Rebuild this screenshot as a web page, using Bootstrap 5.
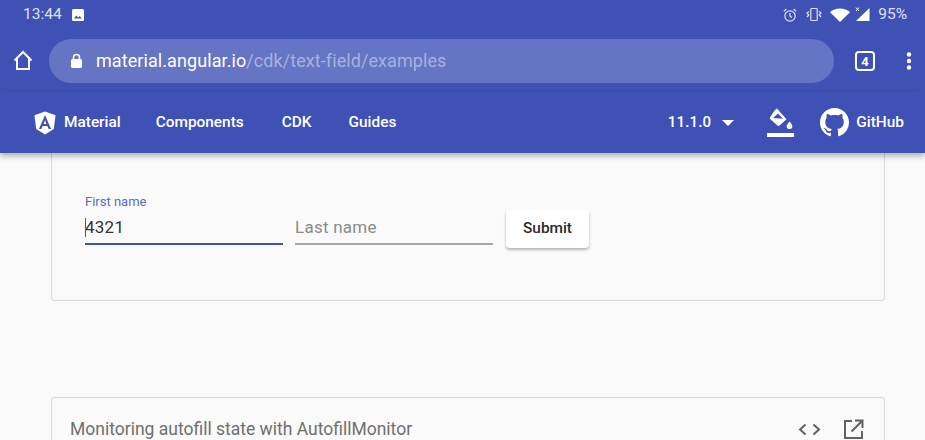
<!DOCTYPE html>
<html lang="en">
<head>
    <meta charset="UTF-8">
    <meta name="viewport" content="width=device-width, initial-scale=1.0">
    <title>Text field | Angular Material</title>
    <link href="https://cdn.jsdelivr.net/npm/bootstrap@5.3.2/dist/css/bootstrap.min.css" rel="stylesheet">
    <style>
        html, body { height: 440px; overflow: hidden; }
        body { background: #fafafa; font-family: Roboto, "Liberation Sans", sans-serif; color: #212121; }
        .phone-head { background: #3f51b5; color: #fff; }
        .status-bar { height: 29px; padding: 0 18px 0 23px; font-size: 15.5px; color: #dfe2f3; }
        .status-bar svg { display: block; }
        .url-row { height: 63px; padding-left: 13px; padding-right: 12px; box-shadow: 0 1px 2px rgba(30, 40, 100, .25); position: relative; }
        .url-pill { width: 785px; height: 44px; margin-left: 16px; background: #6674c4; border-radius: 22px; padding-left: 21px; font-size: 18px; letter-spacing: .08px; flex-shrink: 0; }
        .url-rest { color: #a9b1de; }
        .app-nav { height: 61px; background: #3f51b5; box-shadow: 0 3px 6px rgba(0, 0, 0, .3); position: relative; z-index: 2; padding-left: 34px; padding-right: 21px; font-size: 15.4px; font-weight: 500; }
        .app-nav span { white-space: nowrap; }
        .page-main { padding: 0 40px 0 51px; }
        .demo-box { background: #fafafa; border: 1px solid #d9d9d9; border-radius: 4px; }
        .demo-form { height: 148px; border-top: 0; border-radius: 0 0 4px 4px; padding: 42px 33px 0; }
        .text-field { width: 198px; height: 50px; border-bottom: 2px solid #a8a8a8; position: relative; }
        .text-field.is-active { border-bottom-color: #3f51b5; }
        .float-label { font-size: 13px; line-height: 14px; color: #5c6bc0; height: 14px; display: block; }
        .field-val { font-size: 17px; line-height: 20px; margin-top: 8px; display: block; color: #333; letter-spacing: .25px; }
        .field-hint { color: #8a8a8a; margin-top: 22px; }
        .caret-line { position: absolute; left: 0; top: 23px; height: 19px; width: 1px; background: #3f51b5; }
        .submit-btn { width: 83px; height: 39px; margin-top: 14px; background: #fff; border: 0; border-radius: 4px; font-size: 15.4px; font-weight: 500; color: #2a2a2a; box-shadow: 0 2px 3px rgba(0, 0, 0, .28); padding: 0; }
        .submit-btn:hover { background: #fff; color: #2a2a2a; }
        .demo-head { margin-top: 96px; height: 60px; border-bottom: 0; padding: 0 20px 0 18px; border-radius: 4px 4px 0 0; color: #6f6f6f; font-size: 17.5px; }
    </style>
</head>
<body>
    <div class="phone-head">
        <div class="status-bar d-flex align-items-center">
            <span>13:44</span>
            <svg width="14" height="14" viewBox="0 0 14 14" style="margin-left:9px"><rect x="1" y="1" width="12" height="12" rx="1.5" fill="#fff"/><path d="M3 10.5l2.4-3 1.7 2 1.6-1.6 2.3 2.6z" fill="#3f51b5"/></svg>
            <div class="ms-auto d-flex align-items-center">
                <svg width="16" height="16" viewBox="0 0 16 16" fill="none" stroke="#dfe2f3" stroke-width="1.2"><circle cx="8" cy="9" r="5.2"/><path d="M8 6v3.2l2 1.2M1.8 4.2L4.4 2M14.2 4.2L11.6 2"/></svg>
                <svg style="margin-left:8px" width="16" height="15" viewBox="0 0 16 15" fill="none" stroke="#dfe2f3" stroke-width="1.2"><rect x="4.8" y="1.5" width="6.4" height="12" rx=".8"/><path d="M2.8 4.5L1 6l1.8 2L1 10M13.2 4.5L15 6l-1.800 2L15 10"/></svg>
                <svg style="margin-left:8px" width="20" height="14" viewBox="0 0 20 14"><path d="M0 4.2C2.8 1.8 6.2 .5 10 .5s7.200 1.300 10 3.700L10 14z" fill="#fff"/></svg>
                <svg style="margin-left:4px" width="17" height="17" viewBox="0 0 17 17"><path d="M15.500 2v13H2z" fill="#fff"/><path d="M2 1.500l3 3.500M5 1.500L2 5" stroke="#fff" stroke-width="1" fill="none"/></svg>
                <span style="margin-left:7px">95%</span>
            </div>
        </div>
        <div class="url-row d-flex align-items-center">
            <svg width="20" height="21" viewBox="0 0 20 21" fill="none" stroke="#fff" stroke-width="2"><path d="M1.500 10.500L10 2l8.500 8.500M4 8.500V19h12V8.500"/></svg>
            <div class="url-pill d-flex align-items-center">
                <svg width="13" height="16" viewBox="0 0 13 16"><rect x="1" y="6" width="11" height="9" rx="1.500" fill="#fff"/><path d="M3.500 6.500V4.500a3 3 0 0 1 6 0v2" fill="none" stroke="#fff" stroke-width="1.500"/></svg>
                <span class="text-nowrap" style="margin-left:13px">material.angular.io<span class="url-rest">/cdk/text-field/examples</span></span>
            </div>
            <svg class="ms-auto" width="20" height="20" viewBox="0 0 20 20"><rect x="1" y="1" width="18" height="18" rx="3" fill="none" stroke="#fff" stroke-width="2"/><text x="10" y="15" text-anchor="middle" font-family="Roboto, sans-serif" font-size="13" font-weight="700" fill="#fff">4</text></svg>
            <svg style="margin-left:31px;margin-right:1px" width="6" height="18" viewBox="0 0 6 18" fill="#fff"><circle cx="3" cy="2.500" r="2.200"/><circle cx="3" cy="9" r="2.200"/><circle cx="3" cy="15.500" r="2.200"/></svg>
        </div>
    </div>
    <nav class="app-nav d-flex align-items-center text-white">
        <svg width="22" height="24" viewBox="0 0 22 24"><path d="M11 .500L.500 4.200l1.700 13.700L11 23.500l8.800-5.600 1.700-13.700z" fill="#fff"/><path d="M11 4L5 18h2.400l1.200-3h4.800l1.200 3H17zM9.500 13L11 9.200 12.500 13z" fill="#3f51b5"/></svg>
        <span style="margin-left:8px">Material</span>
        <span style="margin-left:35px">Components</span>
        <span style="margin-left:38px">CDK</span>
        <span style="margin-left:37px">Guides</span>
        <span class="ms-auto" style="font-size:15px;letter-spacing:.2px">11.1.0</span>
        <svg style="margin-left:11px" width="12" height="6" viewBox="0 0 12 6"><path d="M0 0h12L6 6z" fill="#fff"/></svg>
        <svg style="margin-left:33px" width="28" height="30" viewBox="0 0 28 30"><path d="M8 2l2-1.500L13 4l6.500 7.200-7 6.300a1.500 1.500 0 0 1-2 0L3.200 11a1.500 1.500 0 0 1 0-2z" fill="#fff"/><path d="M6 10l5-4.500 5 5.200z" fill="#3f51b5"/><path d="M22.500 13.500s2.800 3 2.800 4.800a2.800 2.800 0 0 1-5.600 0c0-1.800 2.800-4.800 2.800-4.800z" fill="#fff"/><rect x="0" y="25" width="27" height="4" fill="#fff"/></svg>
        <svg style="margin-left:25px" width="29" height="29" viewBox="0 0 16 16"><path fill="#fff" d="M8 0C3.580 0 0 3.580 0 8c0 3.540 2.290 6.530 5.470 7.590.4.070.55-.17.55-.38 0-.19-.01-.82-.01-1.490-2.010.37-2.530-.49-2.690-.94-.09-.23-.48-.94-.82-1.130-.28-.15-.68-.52-.01-.53.630-.01 1.080.58 1.230.82.720 1.210 1.870.87 2.330.66.070-.52.280-.87.510-1.070-1.780-.2-3.640-.89-3.640-3.950 0-.87.310-1.590.820-2.150-.08-.2-.36-1.020.08-2.120 0 0 .67-.21 2.200.82.640-.18 1.320-.27 2-.27s1.360.09 2 .27c1.530-1.040 2.200-.82 2.200-.82.440 1.100.160 1.920.08 2.120.51.560.82 1.270.82 2.150 0 3.070-1.870 3.750-3.650 3.950.290.25.540.73.540 1.480 0 1.070-.01 1.930-.01 2.200 0 .21.150.46.550.38A8.010 8.010 0 0 0 16 8c0-4.420-3.580-8-8-8z"/></svg>
        <span style="margin-left:7px">GitHub</span>
    </nav>
    <main class="page-main">
        <section class="demo-box demo-form d-flex">
            <div class="text-field is-active">
                <label class="float-label">First name</label>
                <span class="field-val">4321</span>
                <span class="caret-line"></span>
            </div>
            <div class="text-field" style="margin-left:12px">
                <span class="field-val field-hint">Last name</span>
            </div>
            <button type="button" class="btn submit-btn" style="margin-left:13px">Submit</button>
        </section>
        <section class="demo-box demo-head d-flex align-items-start">
            <span style="margin-top:18px">Monitoring autofill state with AutofillMonitor</span>
            <svg class="ms-auto" style="margin-top:25px" width="23" height="13" viewBox="0 0 23 13" fill="none" stroke="#616161" stroke-width="2"><path d="M7.500 1.500L2 6.500l5.500 5M15.500 1.500L21 6.500l-5.500 5"/></svg>
            <svg style="margin-top:21px;margin-left:22px" width="21" height="21" viewBox="0 0 21 21" fill="none" stroke="#616161" stroke-width="2"><path d="M9 2H2v17h17v-7M12 1.500h7.500V9M19 2L8.500 12.500"/></svg>
        </section>
    </main>
    <script src="https://cdn.jsdelivr.net/npm/bootstrap@5.3.2/dist/js/bootstrap.bundle.min.js"></script>
</body>
</html>
